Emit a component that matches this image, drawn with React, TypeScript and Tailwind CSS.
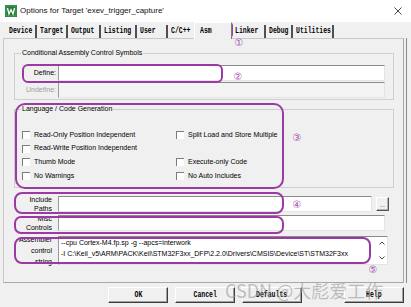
import React from 'react';

const tabs = [
  { label: 'Device', w: 'w-[31px]' },
  { label: 'Target', w: 'w-[31px]' },
  { label: 'Output', w: 'w-[33px]' },
  { label: 'Listing', w: 'w-[36px]' },
  { label: 'User', w: 'w-[31px]' },
  { label: 'C/C++', w: 'w-[26px]', noSep: true },
  { label: 'Asm', w: 'w-[38px]', active: true },
  { label: 'Linker', w: 'w-[34px]' },
  { label: 'Debug', w: 'w-[27px]' },
  { label: 'Utilities', w: 'w-[41px]' },
];

const checks = [
  ['Read-Only Position Independent', 'Split Load and Store Multiple'],
  ['Read-Write Position Independent', ''],
  ['Thumb Mode', 'Execute-only Code'],
  ['No Warnings', 'No Auto Includes'],
];

// condensed bold serif-mono like the old Keil dialog font
const Mono = ({ children, center }: { children: React.ReactNode; center?: boolean }) => (
  <span
    className={`inline-block scale-x-[0.72] whitespace-nowrap font-['Liberation_Mono',monospace] text-[9px] font-bold leading-none ${
      center ? 'origin-center' : 'origin-left'
    }`}
  >
    {children}
  </span>
);

const Check = ({ label }: { label: string }) =>
  label ? (
    <div className="flex items-center gap-[4px]">
      <div className="h-[8px] w-[8px] border-l border-t border-[#7c7c7c] bg-white" />
      <span>{label}</span>
    </div>
  ) : (
    <div />
  );

const Button = ({ label, w = 'w-[60px]', className = '' }: { label: string; w?: string; className?: string }) => (
  <div
    className={`flex h-[16px] ${w} items-center justify-center border border-b-[#3c3c3c] border-l-white border-r-[#3c3c3c] border-t-white bg-[#f0f0f0] shadow-[inset_-1px_-1px_0_#a0a0a0] ${className}`}
  >
    <Mono center>{label}</Mono>
  </div>
);

const Field = ({ w, h = 'h-[16px]', disabled }: { w: string; h?: string; disabled?: boolean }) => (
  <div
    className={`${w} ${h} border border-b-[#e4e4e4] border-l-[#9a9a9a] border-r-[#e4e4e4] border-t-[#8a8a8a] ${
      disabled ? 'bg-[#f4f4f4]' : 'bg-white'
    }`}
  />
);

const Num = ({ n, className }: { n: string; className: string }) => (
  <span
    className={`absolute -translate-x-1/2 -translate-y-1/2 font-['DejaVu_Sans',sans-serif] text-[10px] leading-none text-[#a64fb0] ${className}`}
  >
    {n}
  </span>
);

const App = () => {
  return (
    <div className="relative h-[307px] w-[411px] overflow-hidden bg-[#f0f0f0] font-['Liberation_Sans',sans-serif] text-[7px] text-black">
      {/* title bar */}
      <div className="flex h-[22px] items-center justify-between bg-white pl-[5px] pr-[9px]">
        <div className="flex items-center gap-[3px]">
          <svg width="12" height="12" viewBox="0 0 12 12">
            <rect width="12" height="12" fill="#1f7a35" />
            <rect x="1" y="1" width="10" height="10" fill="none" stroke="#6fbf7f" strokeWidth="0.6" />
            <path d="M2.5 3 L4 9 L6 4.5 L8 9 L9.5 3" fill="none" stroke="#fff" strokeWidth="1.3" />
          </svg>
          <span className="text-[8px] leading-none text-[#111]">Options for Target 'exev_trigger_capture'</span>
        </div>
        <svg width="8" height="8" viewBox="0 0 8 8">
          <path d="M0.5 0.5 L7.5 7.5 M7.5 0.5 L0.5 7.5" stroke="#333" strokeWidth="0.9" />
        </svg>
      </div>

      {/* tabs */}
      <div className="flex h-[16px] items-end pl-[6px]">
        {tabs.map((t) =>
          t.active ? (
            <div
              key={t.label}
              className={`relative z-10 -mb-px flex h-[17px] ${t.w} items-center border-l border-r border-t border-l-white border-r-[#7a7a7a] border-t-white bg-[#f0f0f0] pl-[5px]`}
            >
              <Mono>{t.label}</Mono>
            </div>
          ) : (
            <div
              key={t.label}
              className={`flex h-[13px] ${t.w} items-center pl-[3px] ${t.noSep ? '' : 'border-r-2 border-[#505050]'}`}
            >
              <Mono>{t.label}</Mono>
            </div>
          )
        )}
      </div>

      {/* tab page */}
      <div className="ml-[3px] w-[404px] border-r border-[#8a8a8a] pr-[2px]">
        <div className="h-[245px] border border-[#a8a8a8] border-l-[#c8c8c8] border-t-[#c8c8c8]">
          <fieldset className="mx-[10px] mt-[10px] w-[380px] border border-[#cfcfcf] pb-[1px]">
            <legend className="ml-[6px] px-[1px] leading-[8px]">Conditional Assembly Control Symbols</legend>
            <div className="flex flex-col gap-[1px] pt-[8px]">
              <div className="flex items-center">
                <span className="w-[43px] pr-[2px] text-right">Define:</span>
                <Field w="w-[327px]" />
              </div>
              <div className="flex items-center">
                <span className="w-[43px] pr-[2px] text-right text-[#9c9c9c]">Undefine:</span>
                <Field w="w-[327px]" h="h-[16px]" disabled />
              </div>
            </div>
          </fieldset>

          <fieldset className="mx-[10px] mt-[5px] w-[380px] border border-[#cfcfcf] pb-[4px]">
            <legend className="ml-[6px] px-[1px] leading-[8px]">Language / Code Generation</legend>
            <div className="grid grid-cols-[154px_1fr] grid-rows-[14px_13px_14px_14px] pl-[7px] pt-[15px]">
              {checks.map(([a, b]) => (
                <React.Fragment key={a}>
                  <Check label={a} />
                  <Check label={b} />
                </React.Fragment>
              ))}
            </div>
          </fieldset>

          <div className="ml-[10px] mt-[8px] flex flex-col">
            <div className="flex h-[16px] items-center">
              <span className="w-[39px] pr-[1px] text-right leading-[9px]">
                Include
                <br />
                Paths
              </span>
              <Field w="ml-[5px] w-[314px]" />
              <div className="ml-[4px] flex h-[14px] w-[13px] items-end justify-center border border-b-[#555] border-l-white border-r-[#555] border-t-white pb-[2px] text-[6px] leading-none shadow-[inset_-1px_-1px_0_#b0b0b0]">
                ...
              </div>
            </div>
            <div className="mt-[3px] flex h-[16px] items-center">
              <span className="w-[39px] pr-[1px] text-right leading-[9px]">
                Misc
                <br />
                Controls
              </span>
              <Field w="ml-[5px] w-[327px]" />
            </div>
            <div className="mt-[5px] flex h-[29px] items-center">
              <span className="w-[39px] pr-[1px] text-right leading-[11px]">
                Assembler
                <br />
                control
                <br />
                string
              </span>
              <div className="ml-[5px] flex h-[29px] w-[330px] border border-b-[#e4e4e4] border-l-[#9a9a9a] border-r-[#e4e4e4] border-t-[#8a8a8a] bg-white">
                <div className="grow whitespace-nowrap pl-[2px] leading-[11px]">
                  --cpu Cortex-M4.fp.sp -g --apcs=interwork
                  <br />
                  -I C:\Keil_v5\ARM\PACK\Keil\STM32F3xx_DFP\2.2.0\Drivers\CMSIS\Device\ST\STM32F3xx
                </div>
                <div className="flex w-[11px] flex-col items-center justify-between py-[4px]">
                  <svg width="6" height="4" viewBox="0 0 6 4">
                    <path d="M0.5 3.5 L3 1 L5.5 3.5" fill="none" stroke="#333" strokeWidth="0.9" />
                  </svg>
                  <svg width="6" height="4" viewBox="0 0 6 4">
                    <path d="M0.5 0.5 L3 3 L5.5 0.5" fill="none" stroke="#333" strokeWidth="0.9" />
                  </svg>
                </div>
              </div>
            </div>
          </div>
        </div>
      </div>

      {/* dialog buttons */}
      <div className="mt-[4px] flex">
        <Button label="OK" className="ml-[108px]" />
        <Button label="Cancel" className="ml-[7px]" />
        <Button label="Defaults" className="ml-[7px]" />
        <Button label="Help" className="ml-[42px]" />
      </div>

      {/* annotations drawn over the screenshot */}
      <div className="pointer-events-none absolute left-[196px] top-[22px] h-[16px] w-[37px] rounded-[4px] border-[3px] border-[#9c3aa3]" />
      <div className="pointer-events-none absolute left-[22px] top-[64px] h-[19px] w-[201px] rounded-[6px] border-2 border-[#9c3aa3]" />
      <div className="pointer-events-none absolute left-[15px] top-[103px] h-[86px] w-[269px] rounded-[10px] border-2 border-[#9c3aa3]" />
      <div className="pointer-events-none absolute left-[14px] top-[192px] h-[22px] w-[270px] rounded-[8px] border-2 border-[#9c3aa3]" />
      <div className="pointer-events-none absolute left-[14px] top-[216px] h-[18px] w-[270px] rounded-[7px] border-2 border-[#9c3aa3]" />
      <div className="pointer-events-none absolute left-[14px] top-[237px] h-[27px] w-[357px] rounded-[8px] border-2 border-[#9c3aa3]" />

      <Num n="①" className="left-[239px] top-[43px]" />
      <Num n="②" className="left-[238px] top-[77px]" />
      <Num n="③" className="left-[297px] top-[138px]" />
      <Num n="④" className="left-[297px] top-[205px]" />
      <Num n="⑤" className="left-[373px] top-[270px]" />

      <span className="pointer-events-none absolute left-[225px] top-[281px] whitespace-nowrap font-['Noto_Sans_CJK_SC','Liberation_Sans',sans-serif] text-[18px] leading-none text-[#9a9a9a]/60">
        CSDN @大彪爱工作
      </span>
    </div>
  );
};

export default App;
